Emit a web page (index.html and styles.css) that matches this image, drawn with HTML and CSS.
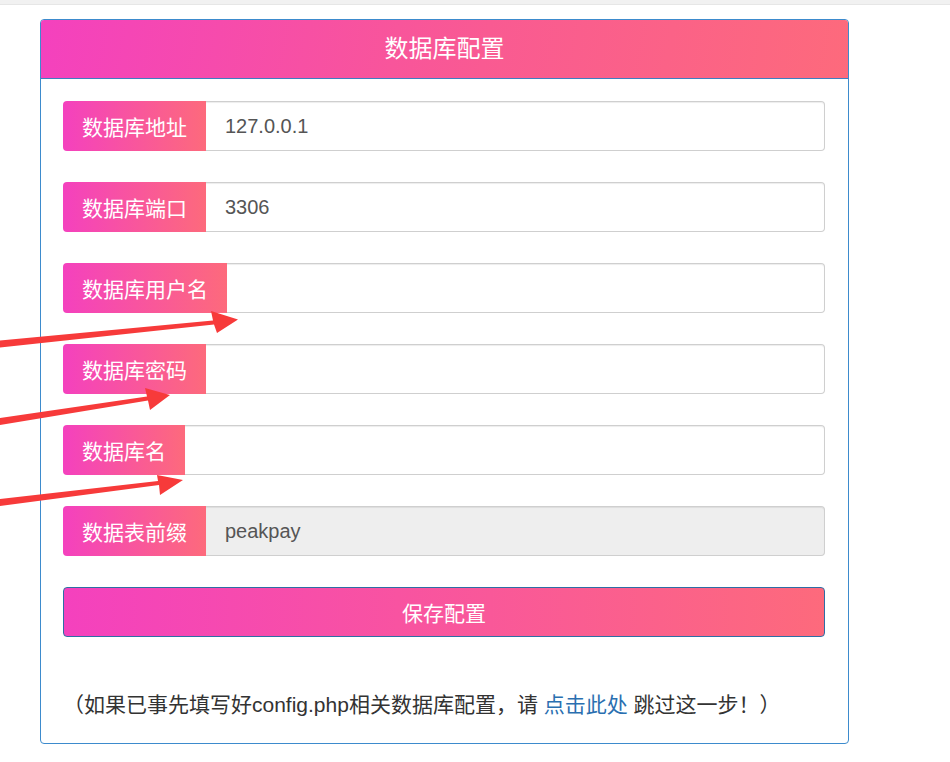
FILE: index.html
```html
<!DOCTYPE html>
<html lang="zh-CN">
<head>
<meta charset="utf-8">
<title>数据库配置</title>
<link rel="stylesheet" href="styles.css">
</head>
<body>
<div class="topbar"></div>
<div class="panel">
  <div class="panel-heading">数据库配置</div>
  <div class="panel-body">
    <div class="input-group"><span class="addon">数据库地址</span><input class="field" type="text" value="127.0.0.1"></div>
    <div class="input-group"><span class="addon">数据库端口</span><input class="field" type="text" value="3306"></div>
    <div class="input-group"><span class="addon">数据库用户名</span><input class="field" type="text" value=""></div>
    <div class="input-group"><span class="addon">数据库密码</span><input class="field" type="text" value=""></div>
    <div class="input-group"><span class="addon">数据库名</span><input class="field" type="text" value=""></div>
    <div class="input-group"><span class="addon">数据表前缀</span><input class="field readonly" type="text" value="peakpay" readonly></div>
    <button class="btn" type="button">保存配置</button>
    <p class="note">（如果已事先填写好config.php相关数据库配置，请 <a class="link" href="#">点击此处</a> 跳过这一步！）</p>
  </div>
</div>
<svg class="arrows" width="950" height="762" viewBox="0 0 950 762">
  <polygon points="0,340.5 213,320.5 211,311 238,319.5 217,333 214,324.5 0,347.5"/>
  <polygon points="0,418 147,396.6 145,388 170,395 150,410 148,400.6 0,425"/>
  <polygon points="0,499 158,481 157,475 183,480 160,495 159,485 0,506"/>
</svg>
</body>
</html>
```
FILE: styles.css
```css
* { box-sizing: border-box; }
html, body { margin: 0; padding: 0; background: #fff; }
body {
  font-family: "Liberation Sans", "Noto Sans CJK SC", sans-serif;
  color: #333;
  position: relative;
  width: 950px;
  height: 762px;
  overflow: hidden;
}
.topbar {
  height: 5px;
  background: #f1f1f1;
  border-bottom: 1px solid #e6e6e6;
}
.panel {
  margin: 14px 0 0 40px;
  width: 809px;
  border: 1px solid #3d8bcd;
  border-radius: 4px;
  overflow: hidden;
}
.panel-heading {
  height: 59px;
  border-bottom: 1px solid #3d7fc0;
  background: linear-gradient(100deg, #f441be 0%, #f95a92 55%, #fd6a7c 100%);
  color: #fff;
  font-size: 24px;
  line-height: 58px;
  text-align: center;
}
.panel-body {
  padding: 22px 23px 23px 22px;
  display: flex;
  flex-direction: column;
}
.input-group {
  display: flex;
  height: 50px;
  margin-bottom: 31px;
}
.addon {
  flex: none;
  display: flex;
  align-items: center;
  padding: 0 19px;
  font-size: 21px;
  color: #fff;
  background: linear-gradient(to right, #f441be, #fd6a7c);
  border-radius: 4px 0 0 4px;
}
.field {
  flex: 1;
  min-width: 0;
  height: 50px;
  border: 1px solid #cfcfcf;
  border-left: none;
  border-radius: 0 4px 4px 0;
  padding: 0 19px;
  font-family: "Liberation Sans", "Noto Sans CJK SC", sans-serif;
  font-size: 20px;
  color: #555;
  background: #fff;
  box-shadow: inset 0 1px 1px rgba(0,0,0,0.075);
  outline: none;
}
.field.readonly { background: #eeeeee; }
.btn {
  height: 50px;
  width: 100%;
  border: 1px solid #2e6da4;
  border-radius: 4px;
  background: linear-gradient(to right, #f441be, #fd6a7c);
  color: #fff;
  font-family: "Liberation Sans", "Noto Sans CJK SC", sans-serif;
  font-size: 21px;
  padding: 0;
}
.note {
  margin: 53px 0 0 0;
  font-size: 21px;
  line-height: 30px;
  color: #333;
  white-space: nowrap;
}
.link { color: #2a6fb0; text-decoration: none; }
.arrows {
  position: absolute;
  left: 0;
  top: 0;
  pointer-events: none;
}
.arrows polygon { fill: #f73a3a; }
```
